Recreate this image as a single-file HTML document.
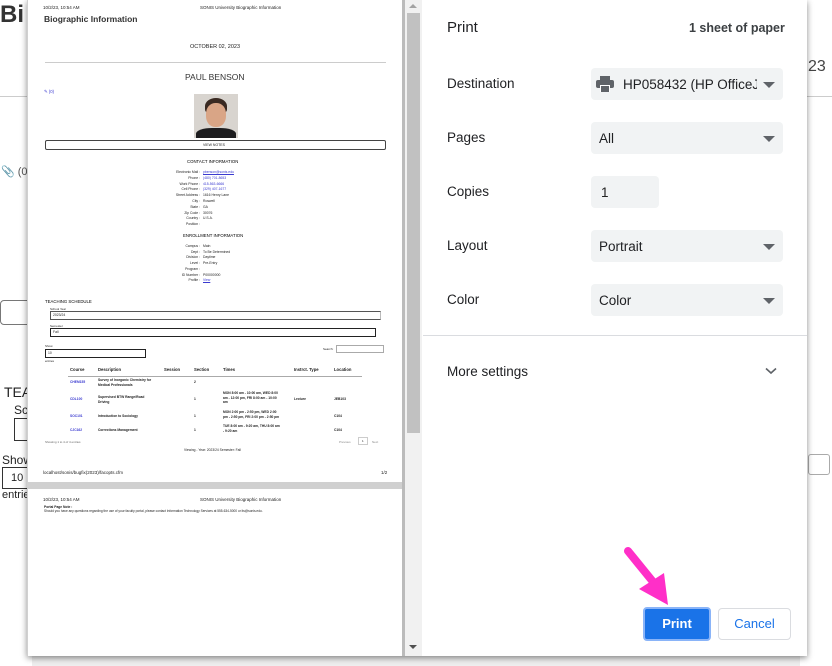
<!DOCTYPE html>
<html><head><meta charset="utf-8"><style>
*{margin:0;padding:0;box-sizing:border-box}
body{width:832px;height:666px;overflow:hidden;background:#fff;font-family:"Liberation Sans",sans-serif;position:relative;color:#222}
.a{position:absolute;white-space:nowrap}
.t{font-size:4.3px;color:#222}
.lnk{color:#3a3ad0}
.b{font-weight:bold}
.set{font-size:13.5px;color:#202124}
.sel{position:absolute;left:591px;width:192px;height:32px;background:#f1f3f4;border-radius:4px;font-size:13.5px;color:#202124;padding:9px 0 0 8px;overflow:hidden;white-space:nowrap}
.sel:after{content:"";position:absolute;right:8px;top:14px;border-left:6px solid transparent;border-right:6px solid transparent;border-top:6px solid #5f6368}
</style></head><body>
<div class="a b" style="left:0;top:1px;font-size:24px;color:#333">Bi</div>
<div class="a" style="left:0;top:96px;width:28px;height:1px;background:#ccc"></div>
<div class="a" style="left:807px;top:96px;width:25px;height:1px;background:#ccc"></div>
<div class="a" style="left:808px;top:58px;font-size:16px;color:#444">23</div>
<div class="a" style="left:1px;top:165px;font-size:11px;color:#555">&#128206; (0</div>
<div class="a" style="left:0;top:300px;width:40px;height:25px;border:1px solid #777;border-radius:4px"></div>
<div class="a" style="left:4px;top:384px;font-size:14px;color:#222">TEA</div>
<div class="a" style="left:14px;top:403px;font-size:12px">Sc</div>
<div class="a" style="left:14px;top:418px;width:20px;height:23px;border:1px solid #333"></div>
<div class="a" style="left:2px;top:453px;font-size:12px">Show</div>
<div class="a" style="left:2px;top:467px;width:30px;height:22px;border:1px solid #333;font-size:11px;padding:4px 0 0 8px">10</div>
<div class="a" style="left:2px;top:489px;font-size:11px">entrie</div>
<div class="a" style="left:808px;top:454px;width:22px;height:21px;border:1px solid #aaa;border-radius:3px"></div>
<div class="a" style="left:32px;top:656px;width:768px;height:10px;background:#eee"></div>

<div class="a" style="left:27px;top:0;width:780px;height:656px;background:#fff;box-shadow:0 2px 6px rgba(0,0,0,.45)"></div>
<div class="a" style="left:27px;top:0;width:378px;height:656px;background:#d0d0d0"></div>
<div class="a" style="left:402px;top:0;width:3px;height:656px;background:#bbb"></div>
<div class="a" style="left:405px;top:0;width:17px;height:656px;background:#f1f1f1"></div>
<div class="a" style="left:407px;top:13px;width:13px;height:420px;background:#c1c1c1"></div>
<div class="a" style="left:409px;top:4px;border-left:4px solid transparent;border-right:4px solid transparent;border-bottom:4px solid #a3a3a3"></div>
<div class="a" style="left:409px;top:645px;border-left:4px solid transparent;border-right:4px solid transparent;border-top:4px solid #505050"></div>

<div class="a" style="left:28px;top:0;width:374px;height:482px;background:#fff"></div>
<div class="a t" style="left:43px;top:5px;font-size:4.5px">10/2/23, 10:54 AM</div>
<div class="a t" style="left:200px;top:5px;font-size:4.5px">SONIS University Biographic Information</div>
<div class="a b" style="left:44px;top:14px;font-size:8.5px;color:#333">Biographic Information</div>
<div class="a t" style="left:190px;top:44px;font-size:5.5px">OCTOBER 02, 2023</div>
<div class="a" style="left:45px;top:62px;width:341px;height:1px;background:#ccc"></div>
<div class="a" style="left:185px;top:72px;font-size:8.5px;color:#333">PAUL BENSON</div>
<div class="a t lnk" style="left:44px;top:89px">&#9998; (0)</div>
<div class="a" style="left:194px;top:94px;width:44px;height:44px;background:#d8d4cf;overflow:hidden">
 <div style="position:absolute;left:11px;top:4px;width:22px;height:16px;background:#3a2a22;border-radius:50% 50% 30% 30%"></div>
 <div style="position:absolute;left:12px;top:9px;width:20px;height:24px;background:#d9a586;border-radius:45%"></div>
 <div style="position:absolute;left:2px;top:34px;width:40px;height:14px;background:#1d1d1f;border-radius:40% 40% 0 0"></div>
</div>
<div class="a" style="left:45px;top:140px;width:341px;height:10px;border:1px solid #444;border-radius:2px"></div>
<div class="a t" style="left:203px;top:143px;font-size:3.5px">VIEW NOTES</div>
<div class="a t" style="left:187px;top:159px;color:#000">CONTACT INFORMATION</div>
<div class="a t" style="left:150px;top:170px;width:50px;text-align:right;line-height:5.8px;font-size:3.4px">Electronic Mail :<br>Phone :<br>Work Phone :<br>Cell Phone :<br>Street Address :<br>City :<br>State :<br>Zip Code :<br>Country :<br>Position :</div>
<div class="a t" style="left:203px;top:170px;line-height:5.8px;font-size:3.4px"><span class="lnk" style="text-decoration:underline">pbenson@sonis.edu</span><br><span class="lnk">(480) 701-8653</span><br><span class="lnk">415-563-6666</span><br><span class="lnk">(329) 407-1677</span><br>1616 Henry Lane<br>Roswell<br>GA<br>30076<br>U.S.A.</div>
<div class="a t" style="left:183px;top:233px;color:#000">ENROLLMENT INFORMATION</div>
<div class="a t" style="left:150px;top:244px;width:50px;text-align:right;line-height:5.7px;font-size:3.4px">Campus :<br>Dept :<br>Division :<br>Level :<br>Program :<br>ID Number :<br>Profile :</div>
<div class="a t" style="left:203px;top:244px;line-height:5.7px;font-size:3.4px">Main<br>To Be Determined<br>Daytime<br>Pre-Entry<br><br>P00000000<br><span class="lnk" style="text-decoration:underline">View</span></div>
<div class="a t" style="left:45px;top:299px;color:#000">TEACHING SCHEDULE</div>
<div class="a t" style="left:50px;top:307px;font-size:3px;text-decoration:underline">School Year</div>
<div class="a" style="left:50px;top:311px;width:331px;height:9px;border:1px solid #555;border-right-color:#bbb"></div>
<div class="a t" style="left:53px;top:313px;font-size:3.4px">2023/24</div>
<div class="a t" style="left:50px;top:324px;font-size:3px;text-decoration:underline">Semester</div>
<div class="a" style="left:50px;top:328px;width:326px;height:9px;border:1px solid #222"></div>
<div class="a t" style="left:53px;top:330px;font-size:3.4px">Fall</div>
<div class="a t" style="left:45px;top:344px;font-size:3px">Show</div>
<div class="a" style="left:45px;top:349px;width:101px;height:9px;border:1px solid #222"></div>
<div class="a t" style="left:48px;top:351px;font-size:3.4px">10</div>
<div class="a t" style="left:45px;top:359px;font-size:3px">entries</div>
<div class="a t" style="left:323px;top:347px;font-size:3px">Search:</div>
<div class="a" style="left:336px;top:345px;width:48px;height:8px;border:1px solid #aaa"></div>
<div class="a t b" style="left:70px;top:367px;font-size:4.2px">Course</div>
<div class="a t b" style="left:98px;top:367px;font-size:4.2px">Description</div>
<div class="a t b" style="left:164px;top:367px;font-size:4.2px">Session</div>
<div class="a t b" style="left:194px;top:367px;font-size:4.2px">Section</div>
<div class="a t b" style="left:223px;top:367px;font-size:4.2px">Times</div>
<div class="a t b" style="left:294px;top:367px;font-size:4.2px">Instrct. Type</div>
<div class="a t b" style="left:334px;top:367px;font-size:4.2px">Location</div>
<div class="a" style="left:68px;top:376px;width:294px;height:1px;background:#aaa"></div>
<div class="a t b lnk" style="left:70px;top:380px;font-size:3.3px">CHEM155</div>
<div class="a t b" style="left:98px;top:378px;font-size:3.3px;line-height:4.5px">Survey of Inorganic Chemistry for<br>Medical Professionals</div>
<div class="a t b" style="left:194px;top:380px;font-size:3.3px">2</div>
<div class="a t b lnk" style="left:70px;top:397px;font-size:3.3px">CDL100</div>
<div class="a t b" style="left:98px;top:395px;font-size:3.3px;line-height:4.5px">Supervised BTW Range/Road<br>Driving</div>
<div class="a t b" style="left:194px;top:397px;font-size:3.3px">1</div>
<div class="a t b" style="left:223px;top:391px;font-size:3.3px;line-height:4.5px">MON 8:00 am - 10:00 am, WED 8:00<br>am - 12:00 pm, FRI 8:00 am - 10:00<br>am</div>
<div class="a t b" style="left:294px;top:397px;font-size:3.3px">Lecture</div>
<div class="a t b" style="left:334px;top:397px;font-size:3.3px">JEB103</div>
<div class="a t b lnk" style="left:70px;top:414px;font-size:3.3px">SOC101</div>
<div class="a t b" style="left:98px;top:414px;font-size:3.3px">Introduction to Sociology</div>
<div class="a t b" style="left:194px;top:414px;font-size:3.3px">1</div>
<div class="a t b" style="left:223px;top:410px;font-size:3.3px;line-height:4.5px">MON 2:00 pm - 2:50 pm, WED 2:00<br>pm - 2:50 pm, FRI 2:00 pm - 2:50 pm</div>
<div class="a t b" style="left:334px;top:414px;font-size:3.3px">C104</div>
<div class="a t b lnk" style="left:70px;top:428px;font-size:3.3px">CJC162</div>
<div class="a t b" style="left:98px;top:428px;font-size:3.3px">Corrections Management</div>
<div class="a t b" style="left:194px;top:428px;font-size:3.3px">1</div>
<div class="a t b" style="left:223px;top:424px;font-size:3.3px;line-height:4.5px">TUE 8:00 am - 9:20 am, THU 8:00 am<br>- 9:20 am</div>
<div class="a t b" style="left:334px;top:428px;font-size:3.3px">C104</div>
<div class="a t" style="left:45px;top:440px;font-size:3px;color:#666">Showing 1 to 4 of 4 entries</div>
<div class="a t" style="left:339px;top:440px;font-size:3px;color:#888">Previous</div>
<div class="a" style="left:358px;top:437px;width:10px;height:8px;border:1px solid #ccc"></div>
<div class="a t" style="left:362px;top:439px;font-size:3px">1</div>
<div class="a t" style="left:372px;top:440px;font-size:3px;color:#888">Next</div>
<div class="a t" style="left:184px;top:448px;font-size:3.3px">Viewing - Year: 2023/24 Semester: Fall</div>
<div class="a t" style="left:43px;top:470px;font-size:4.5px">localhost/sonis/bugfix(2023)/facopts.cfm</div>
<div class="a t" style="left:381px;top:470px;font-size:4.5px">1/2</div>

<div class="a" style="left:28px;top:489px;width:374px;height:167px;background:#fff"></div>
<div class="a t" style="left:43px;top:497px;font-size:4.5px">10/2/23, 10:54 AM</div>
<div class="a t" style="left:200px;top:497px;font-size:4.5px">SONIS University Biographic Information</div>
<div class="a t b" style="left:44px;top:505px;font-size:3.3px">Portal Page Note :</div>
<div class="a t" style="left:44px;top:509px;font-size:3.2px">Should you have any questions regarding the use of your faculty portal, please contact Information Technology Services at 555-634-5000 or its@sonis.edu.</div>

<div class="a set" style="left:447px;top:19px;font-size:15px">Print</div>
<div class="a set" style="left:689px;top:21px;font-size:12.5px;font-weight:bold;color:#3c4043">1 sheet of paper</div>
<div class="a set" style="left:447px;top:76px">Destination</div>
<div class="sel" style="top:68px;padding-left:32px"><span style="display:inline-block;width:134px;overflow:hidden;vertical-align:top;white-space:nowrap">HP058432 (HP OfficeJet</span></div>
<svg class="a" style="left:596px;top:76px" width="18" height="16" viewBox="0 0 18 16"><rect x="4" y="0" width="10" height="4" fill="#5f6368"/><rect x="0" y="4" width="18" height="8" rx="2" fill="#5f6368"/><rect x="4" y="9" width="10" height="7" fill="#fff"/><rect x="5" y="10" width="8" height="6" fill="#5f6368"/></svg>
<div class="a set" style="left:447px;top:130px">Pages</div>
<div class="sel" style="top:122px">All</div>
<div class="a set" style="left:447px;top:184px">Copies</div>
<div class="a" style="left:591px;top:176px;width:68px;height:32px;background:#f1f3f4;border-radius:4px;font-size:13.5px;padding:9px 0 0 10px">1</div>
<div class="a set" style="left:447px;top:238px">Layout</div>
<div class="sel" style="top:230px">Portrait</div>
<div class="a set" style="left:447px;top:292px">Color</div>
<div class="sel" style="top:284px">Color</div>
<div class="a" style="left:423px;top:335px;width:384px;height:1px;background:#dadce0"></div>
<div class="a set" style="left:447px;top:364px">More settings</div>
<svg class="a" style="left:765px;top:367px" width="12" height="8" viewBox="0 0 12 8"><path d="M1 1.5 L6 6 L11 1.5" fill="none" stroke="#5f6368" stroke-width="1.6"/></svg>
<div class="a" style="left:643px;top:607px;width:68px;height:34px;background:#1a73e8;border:2px solid #8ab4f8;border-radius:4px;color:#fff;font-size:13px;font-weight:bold;text-align:center;line-height:30px">Print</div>
<div class="a" style="left:718px;top:608px;width:73px;height:32px;border:1px solid #dadce0;border-radius:4px;color:#1a73e8;font-size:13px;text-align:center;line-height:30px">Cancel</div>
<svg class="a" style="left:620px;top:545px" width="55" height="62" viewBox="0 0 55 62"><path d="M8 6 L34 38" stroke="#ff2fc8" stroke-width="8" stroke-linecap="round"/><path d="M19 44 L44 28 L48 60 Z" fill="#ff2fc8"/></svg>
</body></html>
